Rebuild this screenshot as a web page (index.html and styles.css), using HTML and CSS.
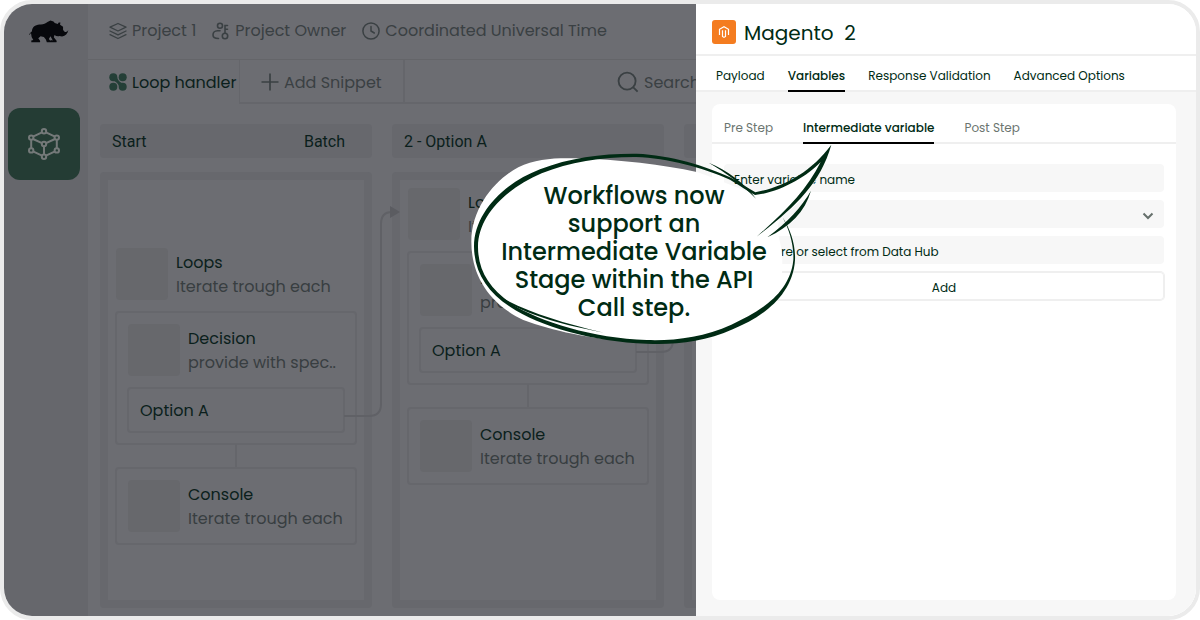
FILE: index.html
```html
<!DOCTYPE html>
<html lang="en">
<head>
<meta charset="utf-8">
<title>Loop handler</title>
<link rel="stylesheet" href="styles.css">
</head>
<body>
<div class="frame">
  <nav class="sidebar" aria-label="Main">
    <svg class="rhino" viewBox="82 56 124 72" aria-label="Rhino"><path d="M85 105C87 98 91 97 94 93C94 81 103 73 117 72C128 73 134 70 141 65L150 60L159 63L163 68L172 71L175 66L180 66L179 73L188 79L188 88C193 98 200 96 204 89C202 101 195 107 185 109L177 107C172 109 167 107 162 104L160 111L169 122L168 126H151L150 119L157 121L150 108L145 116L153 126H139L136 118L130 110L120 108L113 114L119 122L118 126H92L92 121L98 119L93 110L91 98C89 100 88 103 85 105Z"/></svg>
    <button class="side-tile" aria-label="Workflows">
      <svg viewBox="0 0 32 32"><g fill="none" stroke="currentColor" stroke-width="2"><path d="M14 4.3 5 8.7M18 4.3 27 8.7M3.2 12v8M28.8 12v8M5 23.3l9 4.4M27 23.3l-9 4.4M5 11l9 4.2M27 11l-9 4.2M16 18v8"/><circle cx="16" cy="3.2" r="2.2"/><circle cx="3.2" cy="9.6" r="2.2"/><circle cx="28.8" cy="9.6" r="2.2"/><circle cx="16" cy="16" r="2.2"/><circle cx="3.2" cy="22.4" r="2.2"/><circle cx="28.8" cy="22.4" r="2.2"/><circle cx="16" cy="28.8" r="2.2"/></g></svg>
    </button>
  </nav>

  <main class="main">
    <header class="topbar">
      <span class="meta"><svg viewBox="0 0 18 18"><g fill="none" stroke="currentColor" stroke-width="1.3" stroke-linejoin="round" stroke-linecap="round"><path d="M9 1.5 17 5.2 9 9 1 5.2ZM1 9l8 3.8L17 9M1 12.7l8 3.8 8-3.8"/></g></svg>Project 1</span>
      <span class="meta"><svg viewBox="0 0 18 18"><g fill="none" stroke="currentColor" stroke-width="1.6" stroke-linecap="round"><circle cx="8" cy="3.7" r="2.5"/><path d="M8 8.8H5.5C2.5 8.8 1 11 1 13c0 2.5 2 3.5 5.5 3.5"/><circle cx="13" cy="14" r="2.7"/><path d="M13 11V3.5h2.500M13 7.2h2.5"/></g></svg>Project Owner</span>
      <span class="meta"><svg viewBox="0 0 18 18"><g fill="none" stroke="currentColor" stroke-width="1.5" stroke-linecap="round"><circle cx="9" cy="9" r="8.1"/><path d="M9 4.5V9l3.300 2"/></g></svg>Coordinated Universal Time</span>
    </header>
    <div class="tabbar">
      <button class="flow-tab"><svg viewBox="0 0 18 18"><g fill="#243f37"><circle cx="4.300" cy="4.300" r="4"/><circle cx="13.700" cy="4.300" r="4"/><circle cx="4.300" cy="13.700" r="4"/><circle cx="13.700" cy="13.700" r="4"/><path d="M3 7.500C7 8 9 10.500 11 15L15 10.500C11 10 9 7.500 7.500 3Z"/></g></svg>Loop handler</button>
      <button class="add-tab"><svg viewBox="0 0 18 18"><path d="M9 .5v17M.5 9h17" fill="none" stroke="currentColor" stroke-width="1.7"/></svg>Add Snippet</button>
      <label class="search"><svg viewBox="0 0 24 24"><g fill="none" stroke="currentColor" stroke-width="2"><circle cx="11" cy="11" r="9.3"/><path d="m17.500 17.500 5 5"/></g></svg><input type="text" placeholder="Search" aria-label="Search"></label>
    </div>

    <div class="board">
      <section class="column">
        <h2 class="column-head"><span>Start</span><span>Batch</span></h2>
        <div class="column-body late">
          <div class="step"><i class="thumb"></i><div><b>Loops</b><p>Iterate trough each</p></div></div>
          <div class="card">
            <div class="step"><i class="thumb"></i><div><b>Decision</b><p>provide with spec..</p></div></div>
            <div class="option">Option A</div>
          </div>
          <i class="link"></i>
          <div class="card"><div class="step"><i class="thumb"></i><div><b>Console</b><p>Iterate trough each</p></div></div></div>
        </div>
      </section>
      <section class="column">
        <h2 class="column-head"><span>2 - Option A</span></h2>
        <div class="column-body">
          <div class="step"><i class="thumb"></i><div><b>Loops</b><p>Iterate trough each</p></div></div>
          <div class="card">
            <div class="step"><i class="thumb"></i><div><b>Decision</b><p>provide with spec..</p></div></div>
            <div class="option">Option A</div>
          </div>
          <i class="link"></i>
          <div class="card"><div class="step"><i class="thumb"></i><div><b>Console</b><p>Iterate trough each</p></div></div></div>
        </div>
      </section>
      <section class="column">
        <h2 class="column-head"></h2>
        <div class="column-body"></div>
      </section>
      <svg class="wires" viewBox="88 104 608 512" aria-hidden="true"><g fill="none" stroke="#606166" stroke-width="2"><path d="M344 416H369Q381 416 381 404V224Q381 212 392 212"/><path d="M636 352H661Q673 352 673 340V224Q673 212 684 212"/></g><path d="m390 206 10 6-10 6Z" fill="#5b5c61"/></svg>
    </div>
  </main>

  <aside class="panel">
    <header class="panel-head">
      <svg class="magento" viewBox="0 0 24 24"><rect width="24" height="24" rx="3" fill="#f47c20"/><path d="M7.500 15V9.300L12 6.700l4.500 2.600V15M10.500 10.300v6.200L12 17.400l1.500-.9v-6.200" fill="none" stroke="#fff" stroke-width="1.200"/></svg>
      <h1>Magento&nbsp; 2</h1>
    </header>
    <div class="tabs">
      <button>Payload</button><button class="on">Variables</button><button>Response Validation</button><button>Advanced Options</button>
    </div>
    <div class="panel-body">
      <div class="sheet">
        <div class="subtabs">
          <button>Pre Step</button><button class="on">Intermediate variable</button><button>Post Step</button>
        </div>
        <form class="form">
          <input type="text" placeholder="Enter variable name" aria-label="Variable name">
          <div class="pick">
            <select aria-label="Variable type"><option></option></select>
            <svg viewBox="0 0 12 8" aria-hidden="true"><path d="m1.500 1.500 4.500 4.500 4.500-4.500" fill="none" stroke="#66706c" stroke-width="2"/></svg>
          </div>
          <input type="text" placeholder="Type here or select from Data Hub" aria-label="Value">
          <button type="button">Add</button>
        </form>
      </div>
    </div>

    <div class="bubble">
      <svg viewBox="0 0 1200 690" aria-hidden="true">
        <path fill="#fff" d="M94 335C94 230 170 145 235 112C285 87 340 84 400 85C540 88 670 105 770 126C830 145 890 175 946 192C1030 174 1110 130 1172 46C1145 150 1080 225 1020 262C1012 290 1012 305 1017 325C1032 375 1030 450 1012 500C960 550 920 575 880 592C790 630 690 640 600 636C440 627 340 602 250 570C150 522 94 440 94 335Z"/>
        <g fill="#002b14">
          <path d="M1028 262C1052 300 1067 345 1065 390C1058 500 960 565 880 597C790 637 700 645 620 641C460 635 300 590 210 530C140 485 103 425 102 350C102 250 190 160 300 118C390 82 490 70 590 71C690 75 800 108 870 142C900 158 925 175 946 187C1030 170 1110 130 1174 44C1140 165 1060 235 950 320C1040 240 1100 180 1142 96C1100 140 1020 187 945 195C920 180 900 168 870 149C790 113 680 84 590 81C490 80 390 95 305 130C200 175 115 255 114 350C114 425 150 475 216 523C300 575 460 626 620 630C700 633 790 622 874 584C960 545 1050 490 1060 390C1062 345 1048 300 1028 262Z"/>
          <path d="M1113 182C1085 230 1045 275 982 322C1050 290 1095 245 1113 182Z"/>
          <path d="M806 98C860 120 915 160 948 206C905 162 860 130 806 98Z"/>
          <path d="M165 492C230 545 350 582 492 608C350 575 250 541 165 492Z"/>
        </g>
      </svg>
      <p>Workflows now<br>support an<br>Intermediate Variable<br>Stage within the API<br>Call step.</p>
    </div>
  </aside>
</div>
</body>
</html>
```
FILE: styles.css
```css
* { box-sizing: border-box; }

body {
  margin: 0;
  background: #fff;
  color: #002b14;
  font-family: Poppins, Inter, sans-serif;
}

h1, h2, p { margin: 0; font-weight: 400; }
button, input, select { font: inherit; color: inherit; border: 0; padding: 0; background: none; outline: 0; }
button { cursor: pointer; white-space: nowrap; }
svg { display: block; flex: none; }

.frame {
  display: flex;
  min-height: 100vh;
  border: 4px solid #ebebeb;
  border-radius: 32px;
  overflow: hidden;
}

/* sidebar */
.sidebar {
  flex: none;
  width: 84px;
  padding: 15px 4px;
  display: flex;
  flex-direction: column;
  align-items: center;
  gap: 65px;
  background: #66676c;
}
.rhino { width: 41px; height: 24px; margin-left: 4px; fill: #07080c; }
.side-tile {
  display: grid;
  place-items: center;
  width: 72px;
  height: 72px;
  margin-left: -4px;
  border-radius: 12px;
  background: #243c34;
  color: #747979;
}
.side-tile svg { width: 32px; height: 32px; }

/* workflow area */
.main {
  flex: 1;
  min-width: 0;
  overflow: hidden;
  display: flex;
  flex-direction: column;
  background: #6c6d72;
  color: #0b1f1c;
  font-size: 16px;
}
.topbar {
  display: flex;
  align-items: center;
  gap: 16px;
  height: 56px;
  padding: 0 21px 2px;
  border-bottom: 1px solid #646569;
  color: #3a4043;
  white-space: nowrap;
}
.meta, .flow-tab, .add-tab, .search { display: flex; align-items: center; gap: 5px; }
.meta svg, .flow-tab svg, .add-tab svg { width: 18px; height: 18px; }
.tabbar { display: flex; height: 44px; flex: none; }
.flow-tab { padding-left: 21px; width: 151px; }
.add-tab {
  width: 166px;
  padding: 2px 0 0 21px;
  border: solid #65666b;
  border-width: 0 2px 2px 1px;
  color: #3a4043;
}
.search { flex: 1; min-width: 0; justify-content: flex-end; padding-top: 2px; border-bottom: 2px solid #65666b; color: #3a4043; }
.search svg { width: 22px; height: 22px; }
.search input { width: 52px; }
.search input::placeholder { color: #3a4043; opacity: 1; }

.board {
  position: relative;
  flex: 1;
  display: flex;
  gap: 20px;
  padding: 20px 0 8px 12px;
}
.column { flex: none; width: 272px; display: flex; flex-direction: column; gap: 14px; }
.column-head {
  display: flex;
  align-items: center;
  justify-content: space-between;
  height: 34px;
  padding: 2px 27px 0 12px;
  border-radius: 4px;
  background: #67686d;
  font: 400 16px/24px Roboto, sans-serif;
}
.column-body {
  flex: 1;
  display: flex;
  flex-direction: column;
  padding: 8px;
  border: 8px solid #67686d;
  border-radius: 4px;
}
.column-body.late { padding-top: 68px; }
.step { display: flex; align-items: center; gap: 8px; margin-bottom: 12px; line-height: 24px; white-space: nowrap; }
.step div { padding-top: 2px; }
.step b { font-weight: 400; }
.step p { color: #383e41; }
.thumb { flex: none; width: 52px; height: 52px; border-radius: 4px; background: #67686c; }
.card { display: flow-root; padding: 12px 12px 0; }
.card, .option { border-radius: 3px; box-shadow: 0 0 0 1px #66676c, inset 0 0 0 1px #66676c; }
.option { height: 44px; margin-bottom: 12px; padding: 1px 12px 0; line-height: 44px; }
.link { width: 2px; height: 24px; align-self: center; background: #65666b; }
.wires { position: absolute; left: 0; top: 0; width: 608px; height: 512px; }

/* side panel */
.panel {
  position: relative;
  flex: none;
  width: 500px;
  display: flex;
  flex-direction: column;
  background: #fff;
  font-size: 12px;
}
.panel-head {
  display: flex;
  align-items: center;
  gap: 8px;
  height: 52px;
  padding: 6px 16px 0;
  border-bottom: 2px solid #efefef;
}
.magento { width: 24px; height: 24px; }
.panel-head h1 { padding-top: 2px; font-size: 20px; line-height: 24px; }
.tabs { display: flex; gap: 23px; height: 36px; padding: 0 20px; border-bottom: 2px solid #efefef; }
.tabs button, .subtabs button { height: calc(100% + 2px); padding-top: 6px; border-bottom: 2px solid transparent; }
.tabs .on, .subtabs .on { border-color: #000; font-weight: 500; color: #002b14; }
.panel-body {
  flex: 1;
  display: flex;
  padding: 12px 20px 16px 16px;
  background: #f7f7f7;
}
.sheet { flex: 1; border-radius: 8px; background: #fff; }
.subtabs { display: flex; gap: 30px; height: 40px; padding: 0 12px; border-bottom: 2px solid #efefef; color: #6b7570; }
.subtabs button { padding-top: 10px; }
.form { display: grid; gap: 8px; padding: 20px 12px; }
.form input, .form select, .form button { width: 100%; height: 28px; border-radius: 4px; }
.form input, .form select { padding: 4px 10px 0; background: #f7f7f7; }
.form input::placeholder { color: #002b14; opacity: 1; }
.form button { padding-top: 4px; box-shadow: 0 0 0 1px #efefef, inset 0 0 0 1px #efefef; }
.pick { position: relative; }
.pick select { display: block; appearance: none; }
.pick svg { position: absolute; right: 10px; top: 12px; width: 12px; height: 8px; pointer-events: none; }

/* callout drawn over the panel and the board */
.bubble { position: absolute; left: -256px; top: 126px; width: 400px; pointer-events: none; }
.bubble svg { width: 400px; height: 230px; }
.bubble p {
  position: absolute;
  left: 44px;
  top: 52px;
  width: 300px;
  text-align: center;
  font-size: 24px;
  line-height: 28px;
  font-weight: 500;
}
```
